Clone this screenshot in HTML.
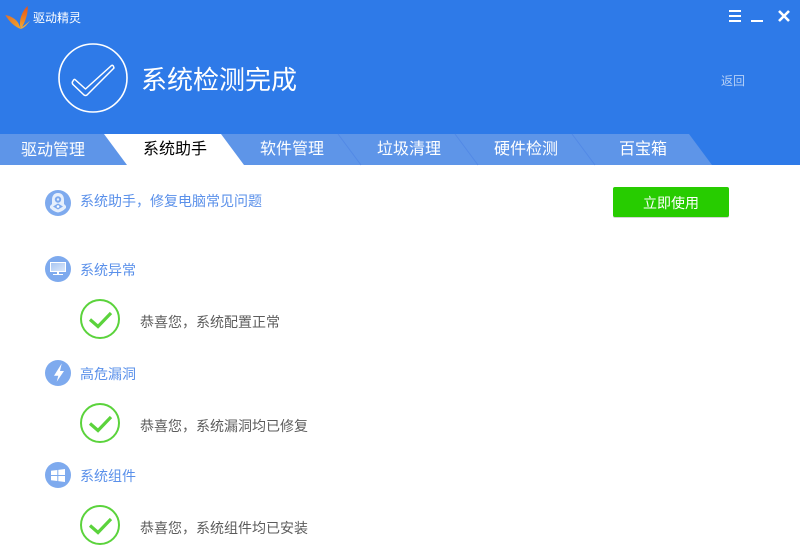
<!DOCTYPE html>
<html lang="zh"><head><meta charset="utf-8"><title>驱动精灵</title>
<style>
html,body{margin:0;padding:0;background:#fff}
#a{position:relative;width:800px;height:560px;overflow:hidden;background:#fff;font-family:"Liberation Sans","Noto Sans CJK SC",sans-serif}
.t{position:absolute;white-space:nowrap;line-height:20px;height:20px}
.b{color:#5a90ea;font-size:14px}
.g{color:#5c5c5c;font-size:14px}
.c{position:absolute;left:0;top:0}
</style></head><body><div id="a">
<svg class="c" width="800" height="560" viewBox="0 0 800 560">
<defs>
<linearGradient id="l" x1="0" y1="0" x2="0" y2="1"><stop offset="0" stop-color="#e4521c"/><stop offset=".6" stop-color="#ee8420"/><stop offset="1" stop-color="#f3b13a"/></linearGradient>
<linearGradient id="w" x1="0" y1="0" x2="1" y2="1"><stop offset="0" stop-color="#e0702a"/><stop offset="1" stop-color="#f2a62c"/></linearGradient>
<linearGradient id="s" x1="0" y1="0" x2="1" y2="1"><stop offset="0" stop-color="#a8c6f2"/><stop offset="1" stop-color="#dbe8fb"/></linearGradient>
</defs>
<rect width="800" height="165" fill="#2e7ae8"/>
<polygon points="0,134 689,134 712,165 0,165" fill="#5e95e8"/>
<path d="M338 134L361 165M455 134L478 165M572 134L595 165" stroke="#5289e6" stroke-width="1" fill="none"/>
<polygon points="104,134 221,134 244,165 127,165" fill="#fff"/>
<path d="M5.300 15C11 16 16 19 18.500 23.500L20.800 29C15 27 9 21.500 5.300 15Z" fill="url(#w)"/>
<path d="M27.700 6C28.200 13 25.500 22 20.800 29C18.500 22 21 12 27.700 6Z" fill="url(#l)"/>
<path d="M30 20.500C27.500 24.500 24.500 27.500 21 29L21.800 27C24.500 25.500 27.500 23 30 20.500Z" fill="#f2a83a"/>
<circle cx="93" cy="78" r="34" fill="none" stroke="#fff" stroke-width="1.600"/>
<path d="M75 79.500L85.500 89L111.500 65.500Q113 64.800 113.500 66.500L114 68L87 95Q85.500 96 84 95L73 84.500Q71.500 82.500 73 81Q74 79 75 79.500Z" fill="none" stroke="#fff" stroke-width="1.500" stroke-linejoin="round"/>
<path d="M729 11H741M729 16H741M729 21H741" stroke="#fff" stroke-width="2"/>
<rect x="751" y="20" width="12" height="2" fill="#fff"/>
<path d="M779 11L789 21M789 11L779 21" stroke="#fff" stroke-width="2.600"/>
<g fill="#7eaaee">
<circle cx="58" cy="203" r="13"/><circle cx="58" cy="269" r="13"/><circle cx="58" cy="373" r="13"/><circle cx="58" cy="475" r="13"/>
</g>
<g fill="#fff">
<path d="M58 193C62.500 193 64 196.500 64 200L64 204L66 206V208Q62 212 58 212.500Q54 212 50 208V206L52 204V200C52 196.500 53.500 193 58 193Z" fill="#e6effc"/>
<circle cx="58" cy="199.500" r="3.200" fill="#7eaaee"/>
<circle cx="58" cy="199.500" r="1.200" fill="#e6effc"/>
<path d="M53 206.500L58 203.500L63 206.500L58 209.500Z" fill="#7eaaee"/>
<circle cx="58" cy="206.500" r="1.300"/>
<path d="M50 262H66V272H50Z"/>
<path d="M51 263H65V271H51Z" fill="url(#s)"/>
<path d="M57 272H59V274H57ZM53 274H63V275H53Z"/>
<path d="M61.700 363.500L54 375.700H58.300L56.700 381.700L64 371H60Z"/>
<path d="M51 470.800L57.300 470V475H51ZM58.300 469.900L65 469V475H58.300ZM51 476H57.300V481L51 480.200ZM58.300 476H65V482L58.300 481.100Z"/>
</g>
<g fill="none" stroke="#5bd33c" stroke-width="2">
<circle cx="100" cy="319" r="19"/><circle cx="100" cy="423" r="19"/><circle cx="100" cy="525" r="19"/>
</g>
<g fill="none" stroke="#5bd33c" stroke-width="3.200">
<path d="M90 319.500L98 326.500L111 313"/><path d="M90 423.500L98 430.500L111 417"/><path d="M90 525.500L98 532.500L111 519"/>
</g>
<rect x="613" y="188" width="116" height="30" rx="2" fill="#d4d4d4"/>
<rect x="613" y="187" width="116" height="30" rx="2" fill="#27cc00"/>
</svg>
<div class="t" style="left:33px;top:8px;font-size:12px;color:#fff">驱动精灵</div>
<div class="t" style="left:141px;top:60px;height:40px;line-height:40px;font-size:26px;color:#fff">系统检测完成</div>
<div class="t" style="left:721px;top:71px;font-size:12px;color:#b6d0f6">返回</div>
<div class="t" style="left:21px;top:141px;font-size:16px;color:#fff">驱动管理</div>
<div class="t" style="left:143px;top:140px;font-size:16px;color:#000">系统助手</div>
<div class="t" style="left:260px;top:140px;font-size:16px;color:#fff">软件管理</div>
<div class="t" style="left:377px;top:140px;font-size:16px;color:#fff">垃圾清理</div>
<div class="t" style="left:494px;top:140px;font-size:16px;color:#fff">硬件检测</div>
<div class="t" style="left:619px;top:140px;font-size:16px;color:#fff">百宝箱</div>
<div class="t b" style="left:80px;top:191px">系统助手，修复电脑常见问题</div>
<div class="t" style="left:643px;top:193px;font-size:14px;color:#fff">立即使用</div>
<div class="t b" style="left:80px;top:260px">系统异常</div>
<div class="t g" style="left:140px;top:312px">恭喜您，系统配置正常</div>
<div class="t b" style="left:80px;top:364px">高危漏洞</div>
<div class="t g" style="left:140px;top:416px">恭喜您，系统漏洞均已修复</div>
<div class="t b" style="left:80px;top:466px">系统组件</div>
<div class="t g" style="left:140px;top:518px">恭喜您，系统组件均已安装</div>
</div></body></html>
